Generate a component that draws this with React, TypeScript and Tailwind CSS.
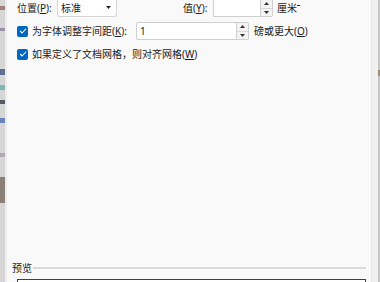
import React from "react";

const font = { fontFamily: '"Noto Sans", "Noto Sans CJK SC", sans-serif' };

function Check() {
  return (
    <div className="w-[11px] h-[11px] rounded-[2px] bg-[#0067c0] flex items-center justify-center shrink-0">
      <svg width="8" height="8" viewBox="0 0 8 8">
        <path d="M1.3 4.2 L3.1 6 L6.8 2" fill="none" stroke="#fff" strokeWidth="1.1" strokeLinecap="round" strokeLinejoin="round" />
      </svg>
    </div>
  );
}

function Spinner() {
  return (
    <div className="w-[12px] h-full flex flex-col border border-l-0 border-[#cfcfcf] bg-[#f3f3f3] rounded-r-[2px]">
      <div className="flex-1 flex items-center justify-center border-b border-[#d9d9d9]">
        <svg width="5" height="3" viewBox="0 0 5 3"><path d="M0 3 L2.5 0 L5 3 Z" fill="#333" /></svg>
      </div>
      <div className="flex-1 flex items-center justify-center">
        <svg width="5" height="3" viewBox="0 0 5 3"><path d="M0 0 L2.5 3 L5 0 Z" fill="#333" /></svg>
      </div>
    </div>
  );
}

export default function App() {
  return (
    <div className="w-[380px] h-[282px] flex overflow-hidden bg-[#f9f9f9] text-[10px] text-[#1b1b1b] leading-none" style={font}>
      <div className="w-[5px] bg-[#d6d6d6] flex flex-col shrink-0">
        <div className="h-[6px]" />
        <div className="h-[4px] bg-[#a08070]" />
        <div className="h-[18px]" />
        <div className="h-[3px] bg-[#9a8fa8]" />
        <div className="h-[38px]" />
        <div className="h-[6px] bg-[#5d6f92]" />
        <div className="h-[10px]" />
        <div className="h-[5px] bg-[#7fb7b7]" />
        <div className="h-[10px]" />
        <div className="h-[4px] bg-[#555a66]" />
        <div className="h-[14px]" />
        <div className="h-[5px] bg-[#6884b8]" />
        <div className="h-[30px]" />
        <div className="h-[4px] bg-[#b2a7b8]" />
        <div className="h-[20px]" />
        <div className="h-[26px] bg-[#8a8078]" />
      </div>
      <div className="w-[2px] bg-[#ececec] shrink-0" />
      <div className="flex-1 flex flex-col min-w-0">
        <div className="flex items-center h-[18px] mt-[-1px] pl-[10px]">
          <span className="w-[40px]">位置(<span className="underline">P</span>):</span>
          <div className="w-[60px] h-full bg-white border border-t-0 border-[#d6d6d6] rounded-b-[3px] flex items-center pl-[3px] pr-[5px] justify-between">
            <span>标准</span>
            <svg width="5" height="3" viewBox="0 0 5 3"><path d="M0 0 L2.5 3 L5 0 Z" fill="#222" /></svg>
          </div>
          <span className="ml-[66px] w-[30px]">值(<span className="underline">Y</span>):</span>
          <div className="w-[48px] h-full bg-white border border-t-0 border-[#cfcfcf]" />
          <Spinner />
          <span className="ml-[4px]">厘米</span>
          <span className="w-[3px] h-px bg-[#333] mb-[5px]" />
        </div>
        <div className="flex items-center h-[18px] mt-[5px] pl-[10px]">
          <Check />
          <span className="ml-[4px] w-[104px]">为字体调整字间距(<span className="underline">K</span>):</span>
          <div className="w-[101px] h-full bg-white border border-[#cfcfcf] rounded-l-[2px] flex items-center pl-[3px]">
            <span>1</span>
          </div>
          <Spinner />
          <span className="ml-[5px]">磅或更大(<span className="underline">O</span>)</span>
        </div>
        <div className="flex items-center h-[18px] mt-[5px] pl-[10px]">
          <Check />
          <span className="ml-[4px]">如果定义了文档网格，则对齐网格(<span className="underline">W</span>)</span>
        </div>
        <div className="flex-1" />
        <div className="flex items-center h-[12px] pl-[5px] pr-[5px]">
          <span>预览</span>
          <div className="flex-1 h-[2px] bg-[#dadada] ml-[1px]" />
        </div>
        <div className="h-[3px] mt-[5px] ml-[10px] mr-[5px] border-x border-t border-[#404040] bg-white" />
      </div>
      <div className="w-px bg-[#e6e6e6] shrink-0" />
      <div className="w-[6px] bg-[#f1f1f1] shrink-0" />
      <div className="w-[2px] bg-[#c4c4c4] shrink-0 flex flex-col">
        <div className="h-[70px]" />
        <div className="h-[6px] bg-[#a08a6a]" />
      </div>
    </div>
  );
}
